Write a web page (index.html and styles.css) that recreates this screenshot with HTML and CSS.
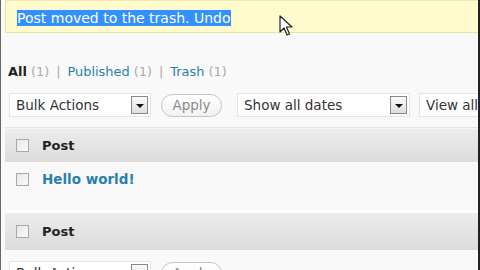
FILE: index.html
```html
<!DOCTYPE html>
<html lang="en">
<head>
    <meta charset="UTF-8">
    <meta name="viewport" content="width=device-width, initial-scale=1.0">
    <title>Edit Posts</title>

    <link rel="stylesheet" href="styles.css">
</head>
<body>

    <div class="wrap">
        <div class="notice">
            <p><span class="sel">Post moved to the trash. Undo</span></p>
        </div>

        <ul class="filters">
            <li><b>All</b> <span class="count">(1)</span></li>
            <li class="sep">|</li>
            <li><a href="#">Published</a> <span class="count">(1)</span></li>
            <li class="sep">|</li>
            <li><a href="#">Trash</a> <span class="count">(1)</span></li>
        </ul>

        <div class="tablenav">
            <div class="select bulk">
                <span>Bulk Actions</span>
                <span class="arrow"></span>
            </div>
            <button class="apply">Apply</button>
            <div class="select dates">
                <span>Show all dates</span>
                <span class="arrow"></span>
            </div>
            <div class="select cats">
                <span>View all</span>
            </div>
        </div>

        <div class="posts">
            <div class="head">
                <span class="check"></span>
                <span class="col">Post</span>
            </div>
            <div class="row">
                <span class="check"></span>
                <a class="title" href="#">Hello world!</a>
            </div>
            <div class="head foot">
                <span class="check"></span>
                <span class="col">Post</span>
            </div>
        </div>

        <div class="tablenav bottom">
            <div class="select bulk">
                <span>Bulk Actions</span>
                <span class="arrow"></span>
            </div>
            <button class="apply">Apply</button>
        </div>

        <!-- mouse pointer -->
        <svg class="pointer" width="16" height="22" viewBox="0 0 16 22">
            <path d="M1 1 L1 17 L5 13 L8 20 L10.5 19 L7.5 12 L13 12 Z" fill="#fff" stroke="#222" stroke-width="1.2" stroke-linejoin="round"/>
        </svg>
    </div>

</body>
</html>
```

FILE: styles.css
```css
body{
    margin: 0;
    background: #f9f9f9;
    font-family: "DejaVu Sans", Verdana, sans-serif;
    font-size: 13px;
    color: #333;
}

.wrap{
    position: relative;
    width: 480px;
    height: 270px;
    overflow: hidden;
    border-left: 1px solid #666;
    border-right: 2px solid #222;
    box-sizing: border-box;
}

.notice{
    margin-left: 4px;
    background: #fffbcc;
    border: 1px solid #ebe39a;
    border-right: none;
    border-top-color: #f1eab0;
}

.notice p{
    margin: 0;
    padding: 9px 11px 6px;
    line-height: 16px;
    font-size: 14px;
}

.sel{
    background: #3390ff;
    color: #fff;
}

.filters{
    list-style: none;
    margin: 31px 0 0 7px;
    padding: 0;
    display: flex;
    gap: 6px;
    line-height: 16px;
    font-size: 12.9px;
}

.filters b{
    color: #222;
}

.filters a{
    color: #2a7fab;
    text-decoration: none;
}

.count{
    color: #aaa;
}

.sep{
    color: #aaa;
    padding: 0 1px;
}

.tablenav{
    display: flex;
    align-items: center;
    margin: 13px 0 0 8px;
    height: 24px;
}

.select{
    display: flex;
    align-items: center;
    justify-content: space-between;
    flex: none;
    box-sizing: border-box;
    height: 24px;
    background: #fff;
    border: 1px solid #e4e4e4;
    padding: 0 2px 0 6px;
    color: #333;
    font-size: 13.5px;
}

.arrow{
    width: 15px;
    height: 16px;
    border: 1px solid #888;
    background: linear-gradient(#fafafa, #dedede);
    position: relative;
}

.arrow::after{
    content: "";
    position: absolute;
    left: 4px;
    top: 7px;
    border-left: 4px solid transparent;
    border-right: 4px solid transparent;
    border-top: 4px solid #111;
}

.bulk{
    width: 142px;
}

.apply{
    flex: none;
    margin-left: 10px;
    width: 61px;
    height: 23px;
    border: 1px solid #c4c4c4;
    border-radius: 12px;
    background: linear-gradient(#fff, #f1f1f1);
    color: #8a8a8a;
    font-family: inherit;
    font-size: 13.5px;
    padding: 0;
}

.dates{
    margin-left: 15px;
    width: 173px;
}

.cats{
    margin-left: 9px;
    width: 80px;
    border-right: none;
}

.posts{
    margin: 10px 0 0 4px;
    border-top: 1px solid #e3e3e3;
}

.head{
    display: flex;
    align-items: center;
    height: 34px;
    background: linear-gradient(#ececec, #dcdcdc);
    border-top: 1px solid #f6f6f6;
    box-sizing: border-box;
}

.foot{
    height: 40px;
    border-top: 3px solid #fdfdfd;
}

.check{
    width: 11px;
    height: 11px;
    margin-left: 11px;
    border: 1px solid #a8a8a8;
    background: linear-gradient(135deg, #e8e8e8, #fafafa);
    flex: none;
}

.col{
    margin-left: 13px;
    font-weight: bold;
    color: #222;
}

.row{
    display: flex;
    align-items: center;
    height: 48px;
    padding-bottom: 14px;
    box-sizing: border-box;
    background: #f8f8f8;
}

.title{
    margin-left: 13px;
    font-weight: bold;
    font-size: 13.5px;
    color: #2a7fab;
    text-decoration: none;
}

.bottom{
    margin-top: 11px;
}

.pointer{
    position: absolute;
    left: 278px;
    top: 15px;
}
```
